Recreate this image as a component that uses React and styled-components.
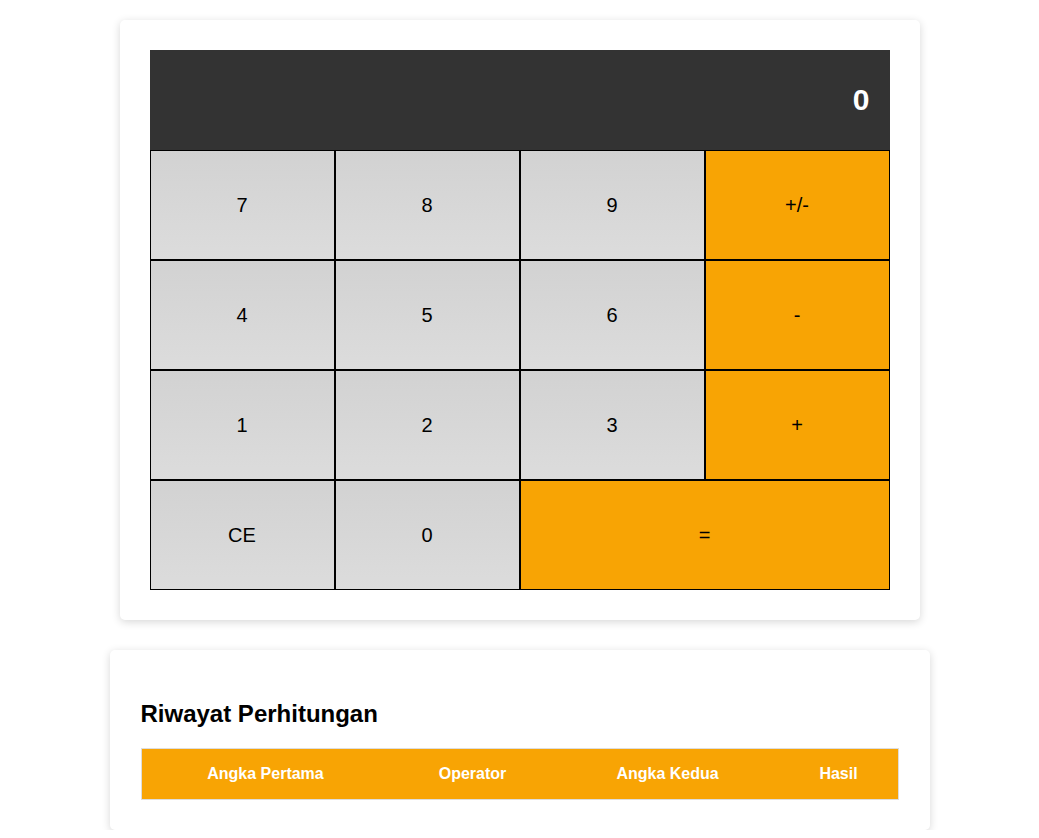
import styled, { createGlobalStyle } from "styled-components";

const GlobalStyle = createGlobalStyle`
  body {
    margin: 0;
    background: #ffffff;
    font-family: "Liberation Sans", Arial, Helvetica, sans-serif;
  }
`;

const Page = styled.div`
  display: flex;
  flex-direction: column;
  align-items: center;
  padding-top: 20px;
  gap: 30px;
`;

const Card = styled.div`
  box-sizing: border-box;
  width: ${(p) => p.$width}px;
  background: #ffffff;
  border-radius: 5px;
  box-shadow: 0 2px 8px rgba(0, 0, 0, 0.16);
  padding: ${(p) => p.$pad || "30px"};
`;

const Display = styled.div`
  height: 100px;
  background: #333333;
  color: #ffffff;
  font-size: 30px;
  font-weight: 700;
  display: flex;
  align-items: center;
  justify-content: flex-end;
  padding-right: 20px;
`;

const Keys = styled.div`
  display: grid;
  grid-template-columns: repeat(4, 185px);
  grid-auto-rows: 110px;
`;

const Key = styled.button`
  box-sizing: border-box;
  grid-column: span ${(p) => p.$span || 1};
  border: 1px solid #000000;
  margin: 0;
  padding: 0;
  font-family: "Liberation Sans", Arial, sans-serif;
  font-size: 20px;
  color: #000000;
  cursor: pointer;
  background: ${(p) =>
    p.$op ? "#f8a404" : "linear-gradient(to bottom, #d2d2d2, #dcdcdc)"};
`;

const Title = styled.h2`
  margin: 20px 0 20px;
  font-size: 24px;
  font-weight: 700;
  color: #000000;
`;

const Table = styled.table`
  width: 756px;
  border-collapse: collapse;
  table-layout: fixed;
`;

const Th = styled.th`
  width: ${(p) => p.$w}px;
  height: 50px;
  background: #f8a404;
  color: #ffffff;
  font-size: 16px;
  font-weight: 700;
  text-align: center;
  padding: 0;
`;

const HeadRow = styled.tr`
  border: 1px solid #dddddd;
`;

const keys = [
  { label: "7" },
  { label: "8" },
  { label: "9" },
  { label: "+/-", op: true },
  { label: "4" },
  { label: "5" },
  { label: "6" },
  { label: "-", op: true },
  { label: "1" },
  { label: "2" },
  { label: "3" },
  { label: "+", op: true },
  { label: "CE" },
  { label: "0" },
  { label: "=", op: true, span: 2 },
];

const columns = [
  { label: "Angka Pertama", w: 248 },
  { label: "Operator", w: 166 },
  { label: "Angka Kedua", w: 224 },
  { label: "Hasil", w: 118 },
];

export default function App() {
  return (
    <>
      <GlobalStyle />
      <Page>
        <Card $width={800}>
          <Display>0</Display>
          <Keys>
            {keys.map((k) => (
              <Key key={k.label} $op={k.op} $span={k.span}>
                {k.label}
              </Key>
            ))}
          </Keys>
        </Card>
        <Card $width={820} $pad="30px 32px 30px 31px">
          <Title>Riwayat Perhitungan</Title>
          <Table>
            <thead>
              <HeadRow>
                {columns.map((c) => (
                  <Th key={c.label} $w={c.w}>
                    {c.label}
                  </Th>
                ))}
              </HeadRow>
            </thead>
          </Table>
        </Card>
      </Page>
    </>
  );
}
